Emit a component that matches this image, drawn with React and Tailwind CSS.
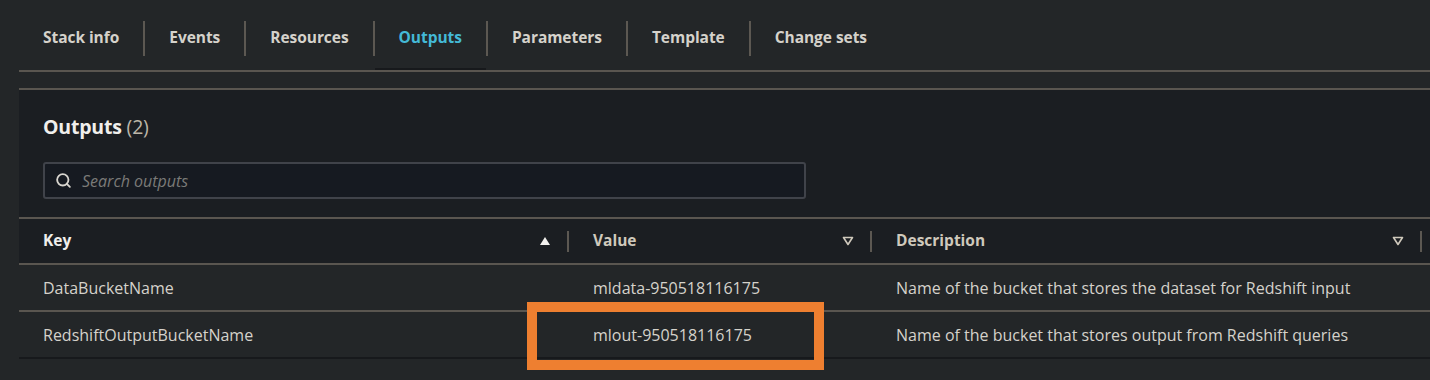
import { Search } from 'lucide-react';

const tabs = ['Stack info', 'Events', 'Resources', 'Outputs', 'Parameters', 'Template', 'Change sets'];

const rows = [
  {
    key: 'DataBucketName',
    value: 'mldata-950518116175',
    desc: 'Name of the bucket that stores the dataset for Redshift input',
  },
  {
    key: 'RedshiftOutputBucketName',
    value: 'mlout-950518116175',
    desc: 'Name of the bucket that stores output from Redshift queries',
    highlight: true,
  },
];

function SortUp() {
  return (
    <svg width="12" height="10" viewBox="0 0 12 10">
      <path d="M6 1 L11 9 L1 9 Z" fill="#f2f1ee" />
    </svg>
  );
}

function SortDown() {
  return (
    <svg width="12" height="10" viewBox="0 0 12 10">
      <path d="M1.5 1.5 L10.5 1.5 L6 8.5 Z" fill="none" stroke="#cfc9bc" strokeWidth="1.6" strokeLinejoin="round" />
    </svg>
  );
}

export default function App() {
  return (
    <div
      className="w-[1430px] h-[380px] overflow-hidden bg-[#232628] text-[#d5d2cb]"
      style={{ fontFamily: '"Open Sans", "Noto Sans", sans-serif' }}
    >
      {/* Tabs */}
      <div className="ml-[19px] h-[72px] flex items-center border-b-2 border-[#5a5650]">
        {tabs.map((t, i) => (
          <div key={t} className="flex items-center h-full pt-[6px]">
            {i > 0 && <div className="w-[2px] h-[35px] bg-[#5c5852]" />}
            <div
              className={
                'h-full flex items-center px-6 text-[15.5px] font-bold tracking-[-0.05px] ' +
                (t === 'Outputs' ? 'text-[#44b9d6] border-b-2 border-[#17191c] pt-[2px]' : 'text-[#d5d2cb]')
              }
            >
              {t}
            </div>
          </div>
        ))}
      </div>

      <div className="ml-[19px] h-[18px] border-b-2 border-[#5a5650]" />

      {/* Panel */}
      <div className="ml-[19px] bg-[#1b1e22]">
        <div className="px-6 pt-[22px] pb-[18px]">
          <h2 className="text-[19.5px] font-bold text-[#f0efec] leading-[30px] tracking-[-0.2px]">
            Outputs <span className="font-normal text-[#bdb6a8]">(2)</span>
          </h2>
          <div className="mt-[20px] w-[763px] h-[37px] flex items-center gap-[10px] px-[10px] bg-[#161a21] border-2 border-[#40434a] rounded-[3px]">
            <Search className="w-[17px] h-[17px] text-[#d8d5cf]" strokeWidth={2.6} />
            <span className="italic text-[16px] text-[#7b7a78]">Search outputs</span>
          </div>
        </div>

        {/* Table */}
        <div className="border-t-2 border-[#5a5650]">
          <div className="h-[44px] flex items-center text-[15.5px] font-bold">
            <div className="w-[548px] pl-6 pr-4 flex items-center justify-between text-[#f0efec]">
              <span>Key</span>
              <SortUp />
            </div>
            <div className="w-[2px] h-[21px] bg-[#5c5852]" />
            <div className="w-[301px] pl-6 pr-4 flex items-center justify-between text-[#cfc9bc]">
              <span>Value</span>
              <SortDown />
            </div>
            <div className="w-[2px] h-[21px] bg-[#5c5852]" />
            <div className="w-[548px] pl-6 pr-4 flex items-center justify-between text-[#cfc9bc]">
              <span>Description</span>
              <SortDown />
            </div>
            <div className="w-[2px] h-[21px] bg-[#5c5852]" />
          </div>
          {rows.map((r) => (
            <div
              key={r.key}
              className="h-[47px] flex items-center border-t-2 border-[#5a5650] bg-[#232628] text-[16px] text-[#d5d2cb]"
            >
              <div className="w-[548px] pl-6">{r.key}</div>
              <div className="w-[2px]" />
              <div className="relative h-full w-[301px] pl-6 flex items-center">
                {r.value}
                {r.highlight && (
                  <span className="absolute left-[-42px] top-[-10px] w-[297px] h-[68px] border-[10px] border-[#ee7f30]" />
                )}
              </div>
              <div className="w-[2px]" />
              <div className="pl-6">{r.desc}</div>
            </div>
          ))}
        </div>
      </div>
      <div className="ml-[19px] h-[2px] bg-[#17191c]" />
    </div>
  );
}
